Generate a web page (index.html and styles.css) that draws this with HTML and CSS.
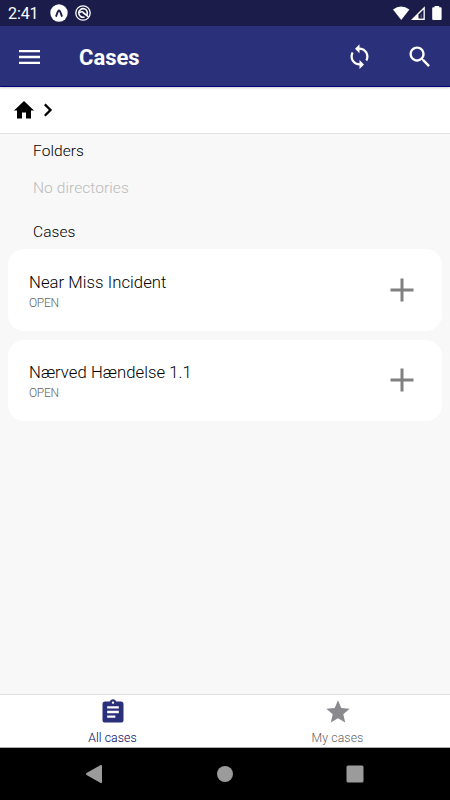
FILE: index.html
```html
<!DOCTYPE html>
<html lang="en">
<head>
<meta charset="utf-8">
<title>Cases</title>
<link rel="stylesheet" href="styles.css">
</head>
<body>
<div class="status">
  <span class="clock">2:41</span>
  <svg class="badge-a" width="18" height="18" viewBox="0 0 18 18"><circle cx="9" cy="9" r="8.700" fill="#fff"/><path d="M5.800 12.600C7 11 7.500 6.500 9 6.500S11 11 12.200 12.600" fill="none" stroke="#1b1c49" stroke-width="1.900"/></svg>
  <svg class="badge-q" width="16" height="16" viewBox="0 0 16 16" fill="none" stroke="#fff"><circle cx="8" cy="8" r="7.200" stroke-width="1.300"/><path d="M11.500 10.500A4.300 4.300 0 1 0 9.500 12M4.600 7.500q3-1.800 4 .7M8 7.500l5.500 4.300" stroke-width="1.600"/></svg>
  <svg class="signals" width="50" height="16" viewBox="0 0 50 16"><path d="M0 3.400Q8-2.600 16.400 3.400L8.200 14Z" fill="#fff"/><path d="M31.800.300V14H18Z" fill="#fff"/><path d="M25.500 12.600V8.500L30.500 3.600v9Z" fill="#1b1c49"/><path d="M27.600 12.600V9L29 7.600v5Z" fill="#50517a"/><path d="M39.200 2.200q0-1 1-1h1.400V0h4.600v1.200h1.400q1 0 1 1V13q0 1-1 1h-7.400q-1 0-1-1Z" fill="#fff"/></svg>
</div>
<header class="appbar">
  <svg class="menu" width="29" height="28" viewBox="0 0 24 24"><path d="M3 18h18v-2H3v2zm0-5h18v-2H3v2zm0-7v2h18V6H3z"/></svg>
  <h1>Cases</h1>
  <svg class="sync" width="27" height="27" viewBox="0 0 24 24"><path d="M12 4V1L8 5l4 4V6c3.310 0 6 2.690 6 6 0 1.010-.250 1.970-.700 2.800l1.460 1.460C19.540 15.030 20 13.570 20 12c0-4.420-3.580-8-8-8zm0 14c-3.310 0-6-2.690-6-6 0-1.010.250-1.970.700-2.800L5.240 7.740C4.460 8.970 4 10.430 4 12c0 4.420 3.580 8 8 8v3l4-4-4-4v3z"/></svg>
  <svg class="search" width="28" height="28" viewBox="0 0 24 24"><path d="M15.500 14h-.790l-.280-.270C15.410 12.590 16 11.110 16 9.500 16 5.910 13.090 3 9.500 3S3 5.910 3 9.500 5.910 16 9.500 16c1.610 0 3.090-.590 4.230-1.570l.270.280v.790l5 4.990L20.490 19l-4.990-5zm-6 0C7.010 14 5 11.990 5 9.500S7.010 5 9.500 5 14 7.010 14 9.500 11.990 14 9.500 14z"/></svg>
</header>
<nav class="crumbs">
  <svg width="24" height="24" viewBox="0 0 24 24"><path d="M10 20.500v-6h4v6h5v-8h3L12 3 2 12.500h3v8z"/></svg>
  <svg width="24" height="24" viewBox="0 0 24 24"><path d="M8 16.900L12.900 12.100 8 7.300 9.600 5.600l6.500 6.500-6.500 6.500z"/></svg>
</nav>
<main>
  <h2>Folders</h2>
  <p class="empty">No directories</p>
  <h2 class="cases">Cases</h2>
  <article class="card">
    <div><h3>Near Miss Incident</h3><p>OPEN</p></div>
    <svg width="24" height="24" viewBox="0 0 24 24"><path d="M.5 12h23M12 .5v23"/></svg>
  </article>
  <article class="card">
    <div><h3>Nærved Hændelse 1.1</h3><p>OPEN</p></div>
    <svg width="24" height="24" viewBox="0 0 24 24"><path d="M.5 12h23M12 .5v23"/></svg>
  </article>
</main>
<nav class="tabs">
  <a class="active"><svg width="28" height="28" viewBox="0 0 24 24"><path d="M19 3h-4.180C14.400 1.840 13.300 1 12 1c-1.300 0-2.400.840-2.820 2H5c-1.100 0-2 .900-2 2v14c0 1.100.900 2 2 2h14c1.100 0 2-.900 2-2V5c0-1.100-.900-2-2-2zm-7 0c.550 0 1 .450 1 1s-.450 1-1 1-1-.450-1-1 .450-1 1-1zm2 14H7v-2h7v2zm3-4H7v-2h10v2zm0-4H7V7h10v2z"/></svg><span>All cases</span></a>
  <a><svg width="28" height="28" viewBox="0 0 24 24"><path d="M12 17.270L18.180 21l-1.640-7.030L22 9.240l-7.190-.610L12 2 9.190 8.630 2 9.240l5.460 4.730L5.820 21z"/></svg><span>My cases</span></a>
</nav>
<footer class="system">
  <svg width="18" height="20" viewBox="0 0 18 20"><path d="M15.700 1Q17 .500 17 2v16q0 1.500-1.300 1L1.500 11Q.3 10 1.500 9Z"/></svg>
  <svg width="18" height="18" viewBox="0 0 18 18"><circle cx="9" cy="9" r="8"/></svg>
  <svg width="18" height="18" viewBox="0 0 18 18"><rect x=".5" y=".5" width="17" height="17" rx="1.500"/></svg>
</footer>
</body>
</html>
```
FILE: styles.css
```css
* { box-sizing: border-box; margin: 0; padding: 0; }
body {
  width: 450px; height: 800px; overflow: hidden;
  display: flex; flex-direction: column;
  background: #f8f8f8; color: #000;
  font-family: Roboto, sans-serif; font-weight: 300;
}
svg { display: block; flex: none; }
.status { height: 26px; flex: none; background: #1b1c49; display: flex; align-items: center; padding: 0 7px 0 8px; color: #fff; }
.clock { font-size: 16px; font-weight: 400; letter-spacing: -.1px; width: 42px; padding-top: 1px; }
.badge-q { margin-left: 7px; }
.signals { margin-left: auto; margin-top: 2px; }
.appbar {
  height: 61px; flex: none; background: #2a3079; border-bottom: 1px solid #00007a;
  display: flex; align-items: center; padding: 1px 16px 0; fill: #fff; color: #fff;
  box-shadow: 0 1px 2px rgba(0, 0, 0, .2); z-index: 1;
}
.menu { margin-left: -1px; }
.appbar h1 { font-size: 22px; font-weight: 700; margin-left: 35px; padding-top: 2px; }
.sync { margin-left: auto; margin-right: 33px; }
.crumbs { height: 47px; flex: none; background: #fff; border-bottom: 1px solid #e2e2e2; display: flex; align-items: center; padding-left: 12px; }
.crumbs svg:first-child { margin-left: -.5px; margin-right: .5px; }
main { flex: 1; padding: 7px 8px 0; }
h2, .empty { font-size: 15.5px; line-height: 20px; font-weight: 300; letter-spacing: .08px; padding-left: 25px; }
.empty { margin-top: 17px; color: #bbb; }
.cases { margin-top: 24px; margin-bottom: 7px; }
.card { height: 82px; border-radius: 16px; background: #fff; display: flex; align-items: center; justify-content: space-between; padding: 3px 28px 0 21px; }
.card + .card { height: 81.5px; margin-top: 8.7px; }
.card h3 { font-size: 16.7px; line-height: 22px; font-weight: 300; letter-spacing: .04px; }
.card p { font-size: 12px; line-height: 16px; margin-top: 1px; font-weight: 300; color: #666; letter-spacing: -.3px; }
.card svg { fill: none; stroke: #808080; stroke-width: 3; margin-top: -3px; }
.tabs { height: 54px; flex: none; background: #fff; border-top: 1px solid #dedede; border-bottom: 1px solid #aaa; display: grid; grid-template-columns: 1fr 1fr; }
.tabs a { display: flex; flex-direction: column; align-items: center; color: #606064; fill: #89898e; padding-top: 3px; }
.tabs span { font-size: 12.3px; line-height: 14px; font-weight: 300; margin-top: 5px; letter-spacing: .08px; }
.tabs .active { color: #00005c; fill: #2a3079; }
.system { height: 52px; flex: none; background: #000; fill: #9b9b9b; display: flex; align-items: center; justify-content: space-between; padding: 0 86px 0 85px; }
```
